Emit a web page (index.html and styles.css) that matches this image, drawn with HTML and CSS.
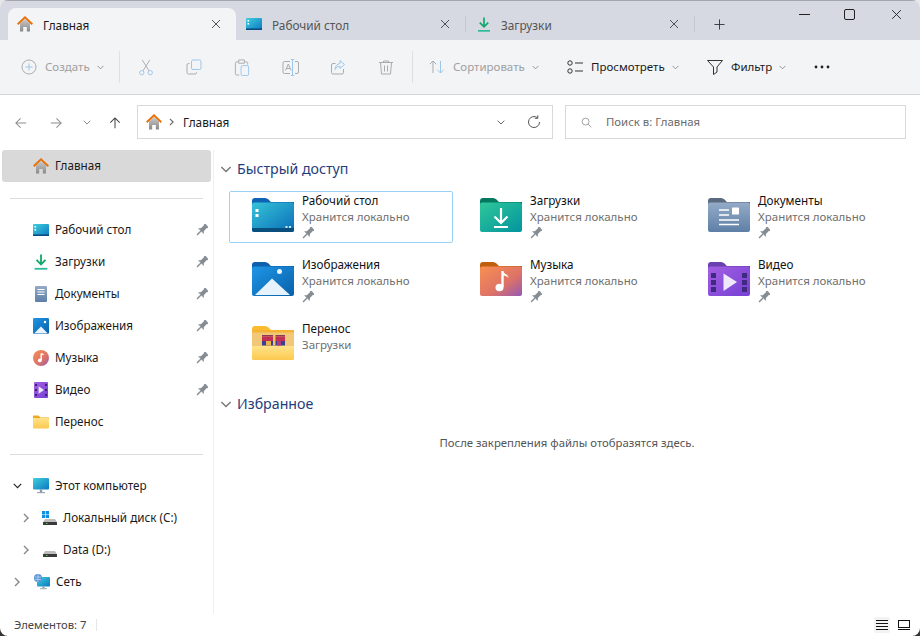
FILE: index.html
```html
<!DOCTYPE html>
<html lang="ru">
<head>
<meta charset="utf-8">
<title>Главная</title>
<link rel="stylesheet" href="styles.css">
</head>
<body>
<svg class="defs" aria-hidden="true">
  <defs>
    <linearGradient id="gHome" x1="0" y1="0" x2="0" y2="1"><stop offset="0" stop-color="#c9c9c9"/><stop offset="1" stop-color="#8a8a8a"/></linearGradient>
    <linearGradient id="gDesk" x1="0" y1="0" x2="1" y2="1"><stop offset="0" stop-color="#35c4d8"/><stop offset="1" stop-color="#0b6db8"/></linearGradient>
    <linearGradient id="gPic" x1="0" y1="0" x2="1" y2="1"><stop offset="0" stop-color="#1e96e6"/><stop offset="1" stop-color="#0860a8"/></linearGradient>
    <linearGradient id="gDl" x1="0" y1="0" x2="1" y2="1"><stop offset="0" stop-color="#2fc79a"/><stop offset="1" stop-color="#02949e"/></linearGradient>
    <linearGradient id="gMus" x1="0" y1="0" x2="1" y2="1"><stop offset="0" stop-color="#f98f50"/><stop offset=".6" stop-color="#dd7268"/><stop offset="1" stop-color="#9358b4"/></linearGradient>
    <linearGradient id="gDoc" x1="0" y1="0" x2="0" y2="1"><stop offset="0" stop-color="#94abc8"/><stop offset="1" stop-color="#5e7fa6"/></linearGradient>
    <linearGradient id="gVid" x1="0" y1="0" x2="1" y2="1"><stop offset="0" stop-color="#a35fe2"/><stop offset="1" stop-color="#7540d4"/></linearGradient>
    <linearGradient id="gYel" x1="0" y1="0" x2="0" y2="1"><stop offset="0" stop-color="#ffe38a"/><stop offset="1" stop-color="#fbc94e"/></linearGradient>
    <linearGradient id="gMon" x1="0" y1="0" x2="1" y2="1"><stop offset="0" stop-color="#3fd0dc"/><stop offset="1" stop-color="#0c78c2"/></linearGradient>

    <symbol id="i-home" viewBox="0 0 16 16">
      <path d="M3 7.500 8 3l5 4.500V15.500H9.800v-4.500H6.200v4.500H3z" fill="url(#gHome)"/>
      <path d="M.7 8.300 8 1.300l7.300 7" fill="none" stroke="#e8710a" stroke-width="1.900"/>
    </symbol>
    <symbol id="i-desk" viewBox="0 0 16 12">
      <rect width="16" height="12" rx="1" fill="url(#gMon)"/>
      <rect y="10.400" width="16" height="1.600" fill="#0a4d80"/>
      <rect x="1.500" y="2" width="1.600" height="1.600" fill="#fff"/><rect x="1.500" y="5" width="1.600" height="1.600" fill="#fff"/>
    </symbol>
    <symbol id="i-dl" viewBox="0 0 12 15">
      <path d="M6 .5v9M1.800 5.600 6 9.800l4.200-4.200" fill="none" stroke="#13a86b" stroke-width="1.700"/>
      <rect y="13" width="12" height="1.700" fill="#2dbb9a"/>
    </symbol>
    <symbol id="i-doc" viewBox="0 0 12 16">
      <rect width="12" height="16" rx="1" fill="url(#gDoc)"/>
      <path d="M2.500 3.500h7M2.500 6h7M2.500 8.500h7" stroke="#fff" stroke-width="1"/>
    </symbol>
    <symbol id="i-pic" viewBox="0 0 14 14">
      <rect width="14" height="14" rx="1" fill="url(#gPic)"/>
      <path d="M1 13.500 7 7.500l6 6z" fill="#e9f4fc"/><circle cx="10.500" cy="3.500" r="1.100" fill="#fff"/>
    </symbol>
    <symbol id="i-mus" viewBox="0 0 16 16">
      <circle cx="8" cy="8" r="8" fill="url(#gMus)"/>
      <path d="M8.200 3.600v6.400M8.200 3.600l2.400 1" stroke="#fff" stroke-width="1.400" fill="none"/><circle cx="6.800" cy="10.400" r="1.900" fill="#fff"/>
    </symbol>
    <symbol id="i-vid" viewBox="0 0 14 16">
      <rect width="14" height="16" rx="1" fill="url(#gVid)"/>
      <path d="M1 2h2v2H1zM1 7h2v2H1zM1 12h2v2H1zM11 2h2v2h-2zM11 7h2v2h-2zM11 12h2v2h-2z" fill="#3c2277"/>
      <path d="M4.600 4.200 10 8l-5.400 3.800z" fill="#efe7fb"/>
    </symbol>
    <symbol id="i-fold" viewBox="0 0 16 13">
      <path d="M0 1a1 1 0 0 1 1-1h4.500L7.500 2H16v2H0z" fill="#eeaa1f"/>
      <rect y="2.500" width="16" height="10.500" rx="1" fill="url(#gYel)"/>
    </symbol>
    <symbol id="i-pc" viewBox="0 0 16 16">
      <rect width="16" height="11.500" rx="1" fill="url(#gMon)"/>
      <rect x="6.800" y="11.500" width="2.400" height="2.500" fill="#8b9aa5"/><rect x="4" y="14" width="8" height="1.200" fill="#9aa7b0"/>
    </symbol>
    <symbol id="i-disk" viewBox="0 0 14 6">
      <path d="M2 0h10l2 3.200V6H0V3.200z" fill="#bdbdbd"/><rect y="3" width="14" height="3" rx=".6" fill="#3a3a3a"/><rect x="3" y="4" width="1.400" height="1" fill="#5ad16a"/>
    </symbol>
    <symbol id="i-win" viewBox="0 0 7 7">
      <path d="M0 0h3.200v3.200H0zM3.800 0H7v3.200H3.800zM0 3.800h3.200V7H0zM3.800 3.800H7V7H3.800z" fill="#0f8fe0"/>
    </symbol>
    <symbol id="i-net" viewBox="0 0 16 16">
      <rect x="3" y="3" width="13" height="9.500" rx="1" fill="url(#gMon)"/>
      <rect x="8.500" y="12.500" width="2" height="1.800" fill="#8b9aa5"/><rect x="6" y="14.200" width="7" height="1" fill="#9aa7b0"/>
      <circle cx="4" cy="4" r="4" fill="#5b93d8"/><path d="M1 3h6M1 5.400h6M4 0v8" stroke="#d5e6f8" stroke-width=".6"/>
    </symbol>
    <symbol id="i-pin" viewBox="0 0 12 12">
      <g transform="rotate(45 6 6)" fill="#848b91">
        <rect x="3.200" y="-.8" width="5.600" height="1.600"/>
        <rect x="4" y=".5" width="4" height="5.500"/>
        <path d="M1.900 7.500 4 5.500h4l2.100 2z"/>
        <rect x="5.300" y="7.500" width="1.400" height="5.500"/>
      </g>
    </symbol>
    <symbol id="i-x" viewBox="0 0 12 12"><path d="M1.200 1.200l9.600 9.600M10.800 1.200l-9.600 9.600" fill="none" stroke="currentColor" stroke-width="1"/></symbol>
    <symbol id="i-chev" viewBox="0 0 8 5"><path d="M.7.7 4 4l3.300-3.300" fill="none" stroke="currentColor" stroke-width="1"/></symbol>
    <symbol id="i-chevr" viewBox="0 0 6 10"><path d="M1 1l4 4-4 4" fill="none" stroke="currentColor" stroke-width="1.400"/></symbol>
    <symbol id="i-folder-desk" viewBox="0 0 42 34">
      <path d="M0 3a3 3 0 0 1 3-3h10q2 0 3.500 1.500L19 4h23v6H0z" fill="#0e63b4"/>
      <rect y="4.500" width="42" height="29.500" rx="2" fill="url(#gDesk)"/>
      <path d="M0 30h42v2a2 2 0 0 1-2 2H2a2 2 0 0 1-2-2z" fill="#0a4e7e"/>
      <rect x="3.500" y="11" width="3" height="3" fill="#fff"/><rect x="3.500" y="16" width="3" height="3" fill="#fff"/>
      <rect x="33.500" y="28" width="2" height="2" fill="#cbe9f5"/><rect x="37" y="28" width="2" height="2" fill="#cbe9f5"/>
    </symbol>
    <symbol id="i-folder-pic" viewBox="0 0 42 34">
      <path d="M0 3a3 3 0 0 1 3-3h10q2 0 3.500 1.500L19 4h23v6H0z" fill="#0e5fad"/>
      <rect y="4.500" width="42" height="29.500" rx="2" fill="url(#gPic)"/>
      <path d="M3 33 20 16.500 38 33z" fill="#e7f3fc"/><circle cx="27.500" cy="9.500" r="2.500" fill="#eaf5fd"/>
    </symbol>
    <symbol id="i-folder-dl" viewBox="0 0 42 34">
      <path d="M0 3a3 3 0 0 1 3-3h10q2 0 3.500 1.500L19 4h23v6H0z" fill="#04795f"/>
      <rect y="4.500" width="42" height="29.500" rx="2" fill="url(#gDl)"/>
      <path d="M21 10v15M14.500 18.500 21 25l6.500-6.500" fill="none" stroke="#fff" stroke-width="2.200"/>
      <rect x="14" y="28" width="14" height="2" fill="#fff"/>
    </symbol>
    <symbol id="i-folder-mus" viewBox="0 0 42 34">
      <path d="M0 3a3 3 0 0 1 3-3h10q2 0 3.500 1.500L19 4h23v6H0z" fill="#c0600e"/>
      <rect y="4.500" width="42" height="29.500" rx="2" fill="url(#gMus)"/>
      <path d="M22.500 9v16" stroke="#fff" stroke-width="2.400"/><path d="M22.500 9c1 3 6 3 6 7-1.500-2-4-2.500-6-2.500z" fill="#fff"/>
      <ellipse cx="19.500" cy="25.500" rx="4" ry="3.800" fill="#fff"/>
    </symbol>
    <symbol id="i-folder-doc" viewBox="0 0 42 34">
      <path d="M0 3a3 3 0 0 1 3-3h10q2 0 3.500 1.500L19 4h23v6H0z" fill="#5a6b80"/>
      <rect y="4.500" width="42" height="29.500" rx="2" fill="url(#gDoc)"/>
      <path d="M11 12h10M11 17h10M11 22h20M11 26.500h20" stroke="#fff" stroke-width="1.500"/>
      <rect x="24" y="9.500" width="7" height="7" rx=".6" fill="#fff"/>
    </symbol>
    <symbol id="i-folder-vid" viewBox="0 0 42 34">
      <path d="M0 3a3 3 0 0 1 3-3h10q2 0 3.500 1.500L19 4h23v6H0z" fill="#6a3fb0"/>
      <rect y="4.500" width="42" height="29.500" rx="2" fill="url(#gVid)"/>
      <path d="M3 11h5v5H3zM3 18h5v5H3zM3 25h5v5H3zM34 11h5v5h-5zM34 18h5v5h-5zM34 25h5v5h-5z" fill="#3f2a80"/>
      <path d="M15.500 11.500 29 20l-13.500 9z" fill="#efe8fb"/>
    </symbol>
    <symbol id="i-folder-rar" viewBox="0 0 42 34">
      <path d="M0 3a3 3 0 0 1 3-3h10q2 0 3.500 1.500L19 4h23v6H0z" fill="#fbbb30"/>
      <rect y="4" width="42" height="30" rx="2" fill="#f0c878"/>
      <rect y="4" width="42" height="2.500" fill="#f5b336"/>
      <rect x="10" y="9" width="23" height="1.500" fill="#8e3a55"/>
      <rect x="10" y="10.500" width="23" height="4.500" fill="#c22f55"/>
      <rect x="10" y="15" width="23" height="4.500" fill="#3a3f96"/>
      <rect x="14" y="15" width="5" height="4.500" fill="#e9b44a"/><rect x="25" y="15" width="4" height="4.500" fill="#b13a78"/>
      <rect x="21" y="9" width="2.500" height="10.500" fill="#edc45f"/>
      <path d="M0 20h42v12a2 2 0 0 1-2 2H2a2 2 0 0 1-2-2z" fill="url(#gYel)"/>
    </symbol>
  </defs>
</svg>

<div class="window">
  <header class="tabbar">
    <div class="tab tab-active">
      <svg class="ic16"><use href="#i-home"/></svg>
      <span class="tab-label">Главная</span>
      <svg class="tab-x"><use href="#i-x"/></svg>
    </div>
    <div class="tab tab-desk">
      <svg class="ic-desk"><use href="#i-desk"/></svg>
      <span class="tab-label">Рабочий стол</span>
      <svg class="tab-x"><use href="#i-x"/></svg>
    </div>
    <i class="tab-sep"></i>
    <div class="tab tab-dl">
      <svg class="ic-dl"><use href="#i-dl"/></svg>
      <span class="tab-label">Загрузки</span>
      <svg class="tab-x"><use href="#i-x"/></svg>
    </div>
    <i class="tab-sep"></i>
    <svg class="tab-plus" viewBox="0 0 12 12"><path d="M6 .5v11M.5 6h11" stroke="#333" fill="none"/></svg>
    <div class="winctl">
      <svg class="wc wc-min" viewBox="0 0 11 1"><path d="M0 .5h11" stroke="#222"/></svg>
      <svg class="wc wc-max" viewBox="0 0 11 11"><rect x=".5" y=".5" width="10" height="10" rx="1.500" fill="none" stroke="#222"/></svg>
      <svg class="wc wc-close"><use href="#i-x"/></svg>
    </div>
  </header>

  <div class="toolbar">
    <div class="tool tool-create dim">
      <svg class="tic" viewBox="0 0 16 16"><circle cx="8" cy="8" r="7" fill="none" stroke="#a9abad"/><path d="M8 4.500v7M4.500 8h7" stroke="#9cc6ea"/></svg>
      <span>Создать</span>
      <svg class="chev"><use href="#i-chev"/></svg>
    </div>
    <i class="tool-sep"></i>
    <div class="actions">
      <svg class="act" viewBox="0 0 16 18"><circle cx="3.500" cy="14.500" r="2.300" fill="none" stroke="#9cc6ea"/><circle cx="12.500" cy="14.500" r="2.300" fill="none" stroke="#9cc6ea"/><path d="M4.800 12.500 12 1M11.200 12.500 4 1" fill="none" stroke="#a9abad"/></svg>
      <svg class="act" viewBox="0 0 16 16"><rect x="5.500" y=".5" width="9.500" height="9.500" rx="1.500" fill="none" stroke="#9cc6ea"/><path d="M3.500 4H2.500A1.500 1.500 0 0 0 1 5.500v7.500A1.500 1.500 0 0 0 2.500 14.500H9a1.500 1.500 0 0 0 1.500-1.500V12.500" fill="none" stroke="#a9abad"/></svg>
      <svg class="act" viewBox="0 0 16 18"><path d="M4 3H2.500A1.500 1.500 0 0 0 1 4.500v11A1.500 1.500 0 0 0 2.500 17H5M11 3h1.500A1.500 1.500 0 0 1 14 4.500V6M4.500 1h6v3.500h-6z" fill="none" stroke="#a9abad"/><rect x="7" y="7" width="8" height="10.500" rx="1.500" fill="none" stroke="#9cc6ea"/></svg>
      <svg class="act act-wide" viewBox="0 0 17 17"><path d="M8 2.500H2.500A1.500 1.500 0 0 0 1 4v9a1.500 1.500 0 0 0 1.500 1.500H8M13 2.500h2A1.500 1.500 0 0 1 16.500 4v9a1.500 1.500 0 0 1-1.500 1.500h-2" fill="none" stroke="#a9abad"/><path d="M3.500 11.500 6.300 5l2.800 6.500M4.500 9.500h3.600" fill="none" stroke="#a9abad"/><path d="M10.500 1v15M8.800 .5h3.400M8.800 16.500h3.400" fill="none" stroke="#9cc6ea"/></svg>
      <svg class="act" viewBox="0 0 16 16"><path d="M13.500 9.500V13a1.500 1.500 0 0 1-1.500 1.500H3A1.500 1.500 0 0 1 1.500 13V5.500A1.500 1.500 0 0 1 3 4h2.500" fill="none" stroke="#a9abad"/><path d="M10 1l4.500 4L10 9V6.800C7.500 6.800 6 8 5 10c.2-3 2-5.800 5-6z" fill="none" stroke="#9cc6ea"/></svg>
      <svg class="act" viewBox="0 0 16 16"><path d="M1 3h14M5.500 3V1.500h5V3M2.500 3l1 11.500h9l1-11.500M6.500 6v6M9.500 6v6" fill="none" stroke="#a9abad"/></svg>
    </div>
    <i class="tool-sep"></i>
    <div class="tool tool-sort dim">
      <svg class="tic" viewBox="0 0 16 16"><path d="M4 14V2M.8 5.200 4 2l3.200 3.200" fill="none" stroke="#a9abad"/><path d="M11.500 2v12M8.300 10.800l3.200 3.200 3.200-3.200" fill="none" stroke="#9cc6ea"/></svg>
      <span>Сортировать</span>
      <svg class="chev"><use href="#i-chev"/></svg>
    </div>
    <div class="tool tool-view">
      <svg class="tic" viewBox="0 0 16 16"><circle cx="3" cy="4" r="2.200" fill="none" stroke="#333"/><circle cx="3" cy="12" r="2.200" fill="none" stroke="#333"/><path d="M8 4h8M8 12h8" stroke="#333"/></svg>
      <span>Просмотреть</span>
      <svg class="chev"><use href="#i-chev"/></svg>
    </div>
    <div class="tool tool-filter">
      <svg class="tic" viewBox="0 0 16 16"><path d="M.5 1.500h15L10 8v5l-3.500 2.500V8z" fill="none" stroke="#333"/></svg>
      <span>Фильтр</span>
      <svg class="chev"><use href="#i-chev"/></svg>
    </div>
    <svg class="more" viewBox="0 0 16 4"><circle cx="2" cy="2" r="1.400" fill="#222"/><circle cx="8" cy="2" r="1.400" fill="#222"/><circle cx="14" cy="2" r="1.400" fill="#222"/></svg>
  </div>

  <div class="navrow">
    <div class="navbtns">
      <svg class="nav" viewBox="0 0 14 14"><path d="M13 7H1M6.500 1.500 1 7l5.500 5.500" fill="none" stroke="#8e8e8e" stroke-width="1.200"/></svg>
      <svg class="nav nav-fwd" viewBox="0 0 14 14"><path d="M1 7h12M7.500 1.500 13 7l-5.500 5.500" fill="none" stroke="#8e8e8e" stroke-width="1.200"/></svg>
      <svg class="nav-ch"><use href="#i-chev"/></svg>
      <svg class="nav" viewBox="0 0 14 14"><path d="M7 13V1M1.500 6.500 7 1l5.500 5.500" fill="none" stroke="#444" stroke-width="1.200"/></svg>
    </div>
    <div class="addr">
      <svg class="ic16"><use href="#i-home"/></svg>
      <svg class="addr-sep"><use href="#i-chevr"/></svg>
      <span class="addr-text">Главная</span>
      <svg class="addr-ch"><use href="#i-chev"/></svg>
      <svg class="addr-rf" viewBox="0 0 14 14"><path d="M12.500 7A5.500 5.500 0 1 1 10.500 2.800M10.800 .3v3h-3" fill="none" stroke="#555" stroke-width="1"/></svg>
    </div>
    <div class="search">
      <svg class="srch" viewBox="0 0 12 12"><circle cx="5" cy="5" r="3.800" fill="none" stroke="#9a9a9a"/><path d="M7.700 7.700l3.500 3.500" stroke="#9a9a9a"/></svg>
      <span>Поиск в: Главная</span>
    </div>
  </div>

  <div class="content">
    <nav class="sidebar">
      <div class="side-row side-home"><svg class="side-ic"><use href="#i-home"/></svg><span>Главная</span></div>
      <hr class="side-sep side-sep-a">
      <div class="side-row"><svg class="side-ic"><use href="#i-desk"/></svg><span>Рабочий стол</span><svg class="pin"><use href="#i-pin"/></svg></div>
      <div class="side-row"><svg class="side-ic"><use href="#i-dl"/></svg><span>Загрузки</span><svg class="pin"><use href="#i-pin"/></svg></div>
      <div class="side-row"><svg class="side-ic"><use href="#i-doc"/></svg><span>Документы</span><svg class="pin"><use href="#i-pin"/></svg></div>
      <div class="side-row"><svg class="side-ic"><use href="#i-pic"/></svg><span>Изображения</span><svg class="pin"><use href="#i-pin"/></svg></div>
      <div class="side-row"><svg class="side-ic"><use href="#i-mus"/></svg><span>Музыка</span><svg class="pin"><use href="#i-pin"/></svg></div>
      <div class="side-row"><svg class="side-ic"><use href="#i-vid"/></svg><span>Видео</span><svg class="pin"><use href="#i-pin"/></svg></div>
      <div class="side-row"><svg class="side-ic"><use href="#i-fold"/></svg><span>Перенос</span></div>
      <hr class="side-sep side-sep-b">
      <div class="side-row side-tree"><svg class="tw tw-down"><use href="#i-chev"/></svg><svg class="side-ic"><use href="#i-pc"/></svg><span>Этот компьютер</span></div>
      <div class="side-row side-sub"><svg class="tw"><use href="#i-chevr"/></svg><span class="disk"><svg class="disk-win"><use href="#i-win"/></svg><svg class="disk-b"><use href="#i-disk"/></svg></span><span>Локальный диск (C:)</span></div>
      <div class="side-row side-sub"><svg class="tw"><use href="#i-chevr"/></svg><span class="disk"><svg class="disk-b"><use href="#i-disk"/></svg></span><span>Data (D:)</span></div>
      <div class="side-row side-tree"><svg class="tw"><use href="#i-chevr"/></svg><svg class="side-ic"><use href="#i-net"/></svg><span>Сеть</span></div>
    </nav>

    <main class="main">
      <h2 class="sec-head"><svg class="sec-ch"><use href="#i-chev"/></svg>Быстрый доступ</h2>
      <div class="grid">
        <div class="card card-sel"><svg class="folder"><use href="#i-folder-desk"/></svg><div class="card-t"><b>Рабочий стол</b><span>Хранится локально</span><svg class="pin"><use href="#i-pin"/></svg></div></div>
        <div class="card"><svg class="folder"><use href="#i-folder-dl"/></svg><div class="card-t"><b>Загрузки</b><span>Хранится локально</span><svg class="pin"><use href="#i-pin"/></svg></div></div>
        <div class="card"><svg class="folder"><use href="#i-folder-doc"/></svg><div class="card-t"><b>Документы</b><span>Хранится локально</span><svg class="pin"><use href="#i-pin"/></svg></div></div>
        <div class="card"><svg class="folder"><use href="#i-folder-pic"/></svg><div class="card-t"><b>Изображения</b><span>Хранится локально</span><svg class="pin"><use href="#i-pin"/></svg></div></div>
        <div class="card"><svg class="folder"><use href="#i-folder-mus"/></svg><div class="card-t"><b>Музыка</b><span>Хранится локально</span><svg class="pin"><use href="#i-pin"/></svg></div></div>
        <div class="card"><svg class="folder"><use href="#i-folder-vid"/></svg><div class="card-t"><b>Видео</b><span>Хранится локально</span><svg class="pin"><use href="#i-pin"/></svg></div></div>
        <div class="card"><svg class="folder"><use href="#i-folder-rar"/></svg><div class="card-t"><b>Перенос</b><span>Загрузки</span></div></div>
      </div>
      <h2 class="sec-head sec-fav"><svg class="sec-ch"><use href="#i-chev"/></svg>Избранное</h2>
      <p class="empty">После закрепления файлы отобразятся здесь.</p>
    </main>
  </div>

  <footer class="status">
    <span class="status-text">Элементов: 7</span>
    <i class="status-sep"></i>
    <div class="status-btns">
      <span class="vbtn vbtn-on"><svg viewBox="0 0 12 10"><path d="M0 .5h12M0 3.500h12M0 6.500h12M0 9.500h12" stroke="#111"/></svg></span>
      <span class="vbtn"><svg viewBox="0 0 12 10"><rect x=".5" y=".5" width="11" height="7" fill="none" stroke="#111"/><path d="M0 9.500h12" stroke="#111"/></svg></span>
    </div>
  </footer>
</div>
</body>
</html>
```

FILE: styles.css
```css
* { box-sizing: border-box; }
html, body { margin: 0; height: 100%; }
body {
  background: linear-gradient(#e6e6e6 50%, #333 50%);
  font: 11.7px/16px "Noto Sans", "Open Sans", sans-serif;
  color: #1a1a1a;
  overflow: hidden;
}
svg { display: block; flex: none; }
.defs { width: 0; height: 0; }

.window {
  width: 920px; height: 636px;
  display: flex; flex-direction: column;
  background: #fff;
  border-radius: 8px;
  overflow: hidden;
}

/* tabs */
.tabbar {
  height: 40px; flex: none;
  display: flex; align-items: flex-end;
  padding-left: 8px;
  background: #d6d9e1;
  border-top: 1px solid #a4a6ab;
}
.tab {
  display: flex; align-items: center;
  height: 32px;
  color: #555;
  font-size: 11.8px;
}
.tab-active {
  width: 228px;
  padding: 0 15px 0 9px;
  background: #f3f4f6;
  border-radius: 8px 8px 0 0;
  color: #1a1a1a;
}
.tab-active .tab-label { margin-left: 10px; }
.tab-desk { width: 229px; padding: 0 15px 0 10px; }
.tab-desk .tab-label { margin-left: 10px; }
.tab-dl { width: 228px; padding: 0 15px 0 12px; }
.tab-dl .tab-label { margin-left: 11px; }
.tab-label { flex: 1; white-space: nowrap; padding-top: 2px; }
.tab-x { width: 10px; height: 10px; color: #333; }
.ic16 { width: 16px; height: 16px; }
.ic-desk { width: 16px; height: 12px; }
.ic-dl { width: 12px; height: 15px; }
.tab-sep { flex: none; width: 1px; height: 16px; margin-bottom: 8px; background: #c4c7cf; }
.tab-plus { width: 11px; height: 11px; margin: 0 0 10px 19px; }
.winctl {
  display: flex; align-self: flex-start; align-items: center;
  margin: 8px 0 0 74px; height: 10px;
}
.wc { height: 11px; width: 11px; color: #222; }
.wc-min { height: 1px; margin-right: 34px; }
.wc-max { margin-right: 36px; }

/* toolbar */
.toolbar {
  height: 55px; flex: none;
  display: flex; align-items: center;
  background: #f3f4f6;
  border-bottom: 1px solid #d5d5d5;
  font-size: 11.5px;
}
.tool { display: flex; align-items: center; flex: none; white-space: nowrap; color: #1a1a1a; }
.dim { color: #a0a0a0; }
.tic { width: 16px; height: 16px; margin-right: 8px; }
.chev { width: 7px; height: 5px; margin-left: 7px; color: #888; }
.tool-create { width: 119px; padding-left: 21px; }
.tool-sep { flex: none; width: 1px; height: 32px; background: #dfe0e2; }
.actions { display: grid; grid-template-columns: repeat(6, 48px); justify-items: center; align-items: center; margin: 0 2px; flex: none; }
.act { width: 16px; height: 17px; }
.act-wide { width: 17px; }
.tool-sort { width: 154px; padding-left: 16px; }
.tool-view { width: 140px; }
.tool-filter { width: 100px; }
.more { width: 16px; height: 4px; margin-left: 7px; }

/* address */
.navrow {
  height: 55px; flex: none;
  display: flex; align-items: center;
  padding: 0 14px 0 0;
}
.navbtns { width: 137px; display: flex; align-items: center; padding-left: 15px; flex: none; }
.nav { width: 12px; height: 12px; }
.nav-fwd { margin-left: 23px; }
.nav-ch { width: 8px; height: 5px; margin: 0 18px 0 21px; color: #8e8e8e; }
.addr, .search {
  height: 34px;
  display: flex; align-items: center;
  border: 1px solid #d9d9d9;
  background: #fff;
  margin-top: -1px;
}
.addr { width: 416px; padding: 0 11px 0 8px; margin-right: 12px; }
.addr-sep { width: 5px; height: 8px; margin: 0 9px 0 7px; color: #666; }
.addr-text { flex: 1; font-size: 11.8px; padding-bottom: 1px; }
.addr-ch { width: 8px; height: 5px; margin-right: 22px; color: #666; }
.addr-rf { width: 14px; height: 14px; }
.search { width: 341px; padding-left: 15px; color: #6b6b6b; font-size: 11.4px; }
.srch { width: 11px; height: 11px; margin-right: 14px; }

/* content */
.content { flex: 1; display: flex; min-height: 0; }
.sidebar {
  width: 214px; flex: none;
  padding: 0 2px;
  border-right: 1px solid #f0f0f0;
}
.side-row { height: 32px; display: flex; align-items: center; padding-left: 31px; white-space: nowrap; }
.side-row > span { padding-bottom: 2px; }
.side-row > .disk { padding-bottom: 0; }
.side-home { background: #d9d9d9; border-radius: 3px; }
.side-ic { width: 16px; height: 16px; margin-right: 6px; }
.side-row .pin { margin-left: auto; margin-right: 3px; }
.pin { width: 12px; height: 12px; }
.side-sep { border: 0; border-top: 1px solid #dcdcdc; margin: 0 8px; height: 1px; }
.side-sep-a { margin-top: 16px; margin-bottom: 15px; }
.side-sep-b { margin-top: 16px; margin-bottom: 15px; }
.tw { width: 6px; height: 10px; color: #888; }
.tw-down { width: 9px; height: 6px; color: #222; }
.side-tree { padding-left: 12px; }
.side-tree .tw { margin-right: 14px; }
.side-tree .tw-down { margin-right: 11px; margin-left: -1px; }
.side-sub { padding-left: 21px; }
.disk { width: 15px; height: 16px; margin-left: 14px; margin-right: 5px; display: flex; flex-direction: column; justify-content: flex-end; }
.disk-b { width: 14px; height: 6px; margin-bottom: 1px; }
.disk-win { width: 7px; height: 7px; margin: 0 0 1px -1px; }

.main { flex: 1; min-width: 0; padding: 8px 6px 0 6px; }
.sec-head {
  margin: 0; height: 22px;
  display: flex; align-items: center;
  font-size: 14.2px; font-weight: 400;
  color: #1f3d7a;
}
.sec-ch { width: 12px; height: 7px; margin-right: 5px; color: #777; }
.grid {
  display: grid;
  grid-template-columns: repeat(3, 224px);
  grid-auto-rows: 52px;
  column-gap: 4px; row-gap: 12px;
  margin: 11px 0 0 9px;
}
.card { display: flex; border: 1px solid transparent; border-radius: 2px; padding: 6px 0 0 22px; }
.card-sel { border-color: #99d1f7; }
.folder { width: 42px; height: 34px; margin-right: 8px; }
.card-t { display: flex; flex-direction: column; white-space: nowrap; margin-top: -6px; }
.card-t b { font-weight: 400; color: #111; }
.card-t span { color: #6f6f6f; font-size: 11.5px; margin-top: 1px; }
.card-t .pin { margin-top: 2px; }
.sec-fav { margin-top: 22px; }
.empty { margin: 20px 0 0; text-align: center; color: #555; font-size: 11.35px; }

/* status */
.status {
  height: 22px; flex: none;
  display: flex; align-items: center;
  padding-left: 14px;
  color: #444;
  font-size: 11.3px;
}
.status-sep { width: 1px; height: 12px; background: #e6e6e6; margin-left: 9px; }
.status-btns { margin-left: auto; display: flex; gap: 6px; padding-right: 8px; }
.vbtn { width: 16px; height: 16px; display: flex; align-items: center; justify-content: center; border-radius: 2px; }
.vbtn-on { background: #f3f3f3; }
.vbtn svg { width: 12px; height: 10px; }
```
